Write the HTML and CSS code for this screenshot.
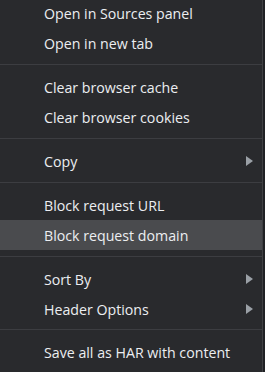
FILE: index.html
```html
<!DOCTYPE html>
<html>
<head>
<meta charset="utf-8">
<link rel="stylesheet" href="styles.css">
</head>
<body>
<div class="menu">
  <div class="item">Open in Sources panel</div>
  <div class="item">Open in new tab</div>
  <div class="sep"></div>
  <div class="item">Clear browser cache</div>
  <div class="item">Clear browser cookies</div>
  <div class="sep"></div>
  <div class="item sub">Copy<span class="arrow"></span></div>
  <div class="sep"></div>
  <div class="item">Block request URL</div>
  <div class="item active">Block request domain</div>
  <div class="sep"></div>
  <div class="item sub">Sort By<span class="arrow"></span></div>
  <div class="item sub">Header Options<span class="arrow"></span></div>
  <div class="sep sep-last"></div>
  <div class="item">Save all as HAR with content</div>
</div>
</body>
</html>
```
FILE: styles.css
```css
html, body {
  margin: 0;
  padding: 0;
  background: #202124;
  height: 100%;
  overflow: hidden;
}
.menu {
  width: 262px;
  height: 380px;
  margin-top: -2px;
  background: #292a2d;
  border-right: 1px solid #3f4043;
  font-family: "Open Sans", "Noto Sans", sans-serif;
  font-size: 14.2px;
  color: #eceef1;
}
.item {
  height: 30px;
  display: flex;
  align-items: center;
  padding-left: 44px;
  padding-right: 9px;
}
.item.active {
  background: #4a4b4e;
}
.sub {
  justify-content: space-between;
}
.arrow {
  width: 0;
  height: 0;
  border-top: 5px solid transparent;
  border-bottom: 5px solid transparent;
  border-left: 7px solid #9aa0a6;
}
.sep {
  height: 1px;
  background: #3c3d41;
  margin: 6px 0 7px;
}
.sep-last {
  margin-top: 5px;
}
```
